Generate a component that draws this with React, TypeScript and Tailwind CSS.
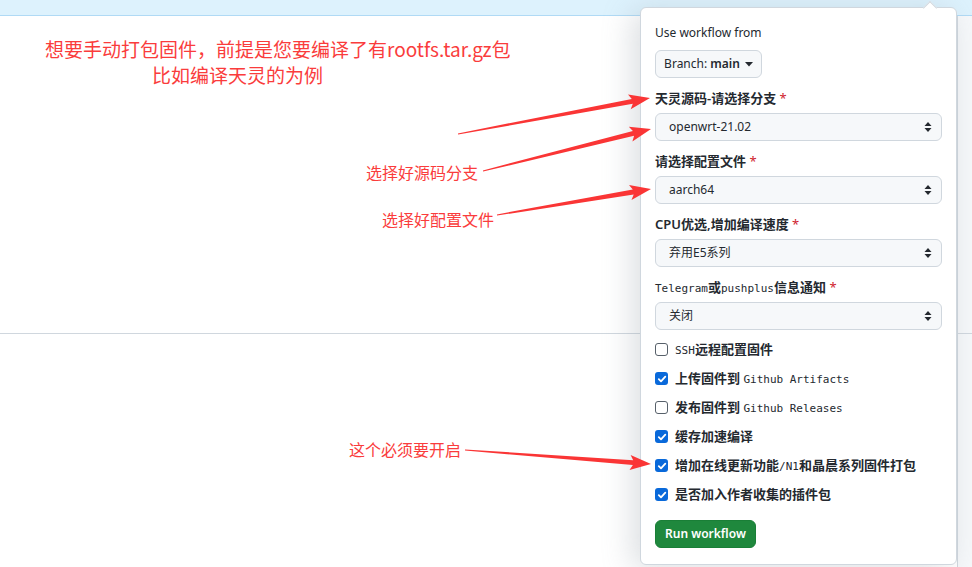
const sans = "font-['Noto_Sans','Noto_Sans_CJK_SC',sans-serif]";
const cjk = "font-['Noto_Sans_CJK_SC',sans-serif]";
const mono = "font-['DejaVu_Sans_Mono','Noto_Sans_CJK_SC',monospace] text-[11px] font-normal";

function arrowPoints(x1: number, y1: number, x2: number, y2: number, shaft = 5, headLen = 18, headW = 15) {
  const dx = x2 - x1;
  const dy = y2 - y1;
  const len = Math.hypot(dx, dy);
  const ux = dx / len;
  const uy = dy / len;
  const nx = -uy;
  const ny = ux;
  const bx = x2 - ux * headLen;
  const by = y2 - uy * headLen;
  const pts = [
    [x1 + nx * 0.6, y1 + ny * 0.6],
    [bx + (nx * shaft) / 2, by + (ny * shaft) / 2],
    [bx - ux * 3 + (nx * headW) / 2, by - uy * 3 + (ny * headW) / 2],
    [x2, y2],
    [bx - ux * 3 - (nx * headW) / 2, by - uy * 3 - (ny * headW) / 2],
    [bx - (nx * shaft) / 2, by - (ny * shaft) / 2],
    [x1 - nx * 0.6, y1 - ny * 0.6],
  ];
  return pts.map((p) => p.map((v) => v.toFixed(1)).join(",")).join(" ");
}

const arrows = [
  [458, 134, 650, 98],
  [483, 171, 651, 129],
  [497, 215, 651, 189],
  [465, 450, 651, 464],
];

function SelectArrows() {
  return (
    <svg width="8" height="12" viewBox="0 0 8 12" className="absolute right-[9px] top-1/2 -translate-y-1/2">
      <path d="M4 1 L7.5 5 H0.5 Z" fill="#24292f" />
      <path d="M4 11 L7.5 7 H0.5 Z" fill="#24292f" />
    </svg>
  );
}

function Field({ label, value }: { label: React.ReactNode; value: string }) {
  return (
    <div className="mt-[11px]">
      <div className="h-[18px] leading-[18px] text-[13px] font-semibold text-[#24292f]">
        {label} <span className="text-[#cf222e] font-normal">*</span>
      </div>
      <div className="relative mt-[6px] h-[28px] rounded-md border border-[#d0d7de] bg-[#f6f8fa] pl-[13px] text-[12px] leading-[26px] text-[#24292f]">
        {value}
        <SelectArrows />
      </div>
    </div>
  );
}

function Check({ checked, children }: { checked: boolean; children: React.ReactNode }) {
  return (
    <div className="flex h-[29px] items-center gap-[7px]">
      {checked ? (
        <span className="flex h-[13px] w-[13px] items-center justify-center rounded-[3px] bg-[#0969da]">
          <svg width="10" height="10" viewBox="0 0 10 10">
            <path d="M1.8 5.2 L4 7.4 L8.3 2.6" stroke="white" strokeWidth="1.8" fill="none" strokeLinecap="round" strokeLinejoin="round" />
          </svg>
        </span>
      ) : (
        <span className="h-[13px] w-[13px] rounded-[3px] border border-[#57606a] bg-white" />
      )}
      <span className="text-[13px] font-semibold text-[#24292f]">{children}</span>
    </div>
  );
}

export default function App() {
  return (
    <div className={`relative h-[567px] w-[972px] overflow-hidden bg-white ${sans}`}>
      <div className="h-[16px] border-b border-[#b0daf5] bg-[#ddf2fd]" />
      <div className="flex h-[551px]">
        <div className="flex flex-1 flex-col">
          <div className="h-[318px] border-b border-[#d0d7de]" />
          <div className="flex-1" />
        </div>
        <div className="w-[15px] border-l border-[#d0d7de] bg-[#f6f8fa]">
          <div className="h-[318px] border-b border-[#d0d7de]" />
        </div>
      </div>

      {/* annotations */}
      <div className={`absolute left-[45px] top-[36px] text-[19px] leading-[26px] text-[#fa3c3c] ${cjk}`}>
        想要手动打包固件，前提是您要编译了有rootfs.tar.gz包
      </div>
      <div className={`absolute left-[152px] top-[62px] text-[19px] leading-[26px] text-[#fa3c3c] ${cjk}`}>
        比如编译天灵的为例
      </div>
      <div className={`absolute left-[366px] top-[161px] text-[16px] leading-[22px] text-[#fa3c3c] ${cjk}`}>选择好源码分支</div>
      <div className={`absolute left-[382px] top-[208px] text-[16px] leading-[22px] text-[#fa3c3c] ${cjk}`}>选择好配置文件</div>
      <div className={`absolute left-[349px] top-[438px] text-[16px] leading-[22px] text-[#fa3c3c] ${cjk}`}>这个必须要开启</div>

      {/* workflow dropdown */}
      <div className="absolute left-[640px] top-[7px] w-[317px] rounded-md border border-[#d0d7de] bg-white px-[14px] pb-[16px] pt-[16px] shadow-[-8px_4px_30px_rgba(140,149,159,0.3)]">
        <div className="absolute -top-[5px] left-[284px] h-[10px] w-[10px] rotate-45 border-l border-t border-[#d0d7de] bg-white" />
        <div className="relative h-[18px] text-[12px] leading-[18px] text-[#24292f]">Use workflow from</div>
        <div className="mt-2 flex h-7 w-[107px] items-center justify-center gap-[5px] rounded-md border border-[#d0d7de] bg-[#f6f8fa] text-[12px] text-[#24292f]">
          <span>
            Branch: <span className="font-semibold">main</span>
          </span>
          <svg width="8" height="5" viewBox="0 0 8 5">
            <path d="M0 0 H8 L4 4.5 Z" fill="#24292f" />
          </svg>
        </div>
        <Field label="天灵源码-请选择分支" value="openwrt-21.02" />
        <Field label="请选择配置文件" value="aarch64" />
        <Field label="CPU优选,增加编译速度" value="弃用E5系列" />
        <Field
          label={
            <>
              <span className={mono}>Telegram</span>或<span className={mono}>pushplus</span>信息通知
            </>
          }
          value="关闭"
        />
        <div className="mt-[5px]">
          <Check checked={false}>
            <span className={mono}>SSH</span>远程配置固件
          </Check>
          <Check checked>
            上传固件到 <span className={mono}>Github Artifacts</span>
          </Check>
          <Check checked={false}>
            发布固件到 <span className={mono}>Github Releases</span>
          </Check>
          <Check checked>缓存加速编译</Check>
          <Check checked>
            增加在线更新功能<span className={mono}>/N1</span>和晶晨系列固件打包
          </Check>
          <Check checked>是否加入作者收集的插件包</Check>
        </div>
        <button className="mt-[11px] flex h-7 w-[101px] items-center justify-center rounded-md border border-[#1a7f37] bg-[#1f883d] text-[12px] font-semibold text-white">
          Run workflow
        </button>
      </div>

      <svg className="pointer-events-none absolute left-0 top-0" width="972" height="567">
        {arrows.map(([a, b, c, d], i) => (
          <polygon key={i} points={arrowPoints(a, b, c, d)} fill="#fa3535" />
        ))}
      </svg>
    </div>
  );
}
